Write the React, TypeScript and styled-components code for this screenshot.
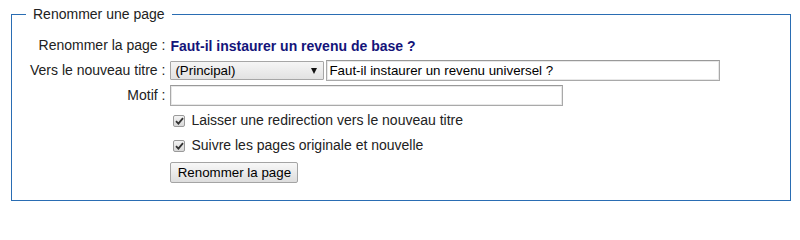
import React from "react";
import styled, { createGlobalStyle } from "styled-components";

const Global = createGlobalStyle`
  html, body { margin: 0; padding: 0; background: #fff; }
  body { font-family: "Liberation Sans", Arial, sans-serif; font-size: 14px; color: #222; }
  * { box-sizing: border-box; }
`;

const Page = styled.div`
  padding: 6px 9px 0 11px;
  width: 800px;
`;

const Fieldset = styled.fieldset`
  margin: 0;
  border: 1px solid #2a6db3;
  padding: 10px 10px 17px 18px;
  min-width: 0;
`;

const Legend = styled.legend`
  margin-left: -4px;
  padding: 0 7px;
  font-size: 14px;
  line-height: 17px;
  color: #222;
`;

const Form = styled.div`
  display: grid;
  grid-template-columns: max-content 1fr;
  grid-auto-rows: 25px;
  column-gap: 5px;
  align-items: center;
`;

const Label = styled.div`
  text-align: right;
  white-space: nowrap;
  line-height: 17px;
`;

const Value = styled.div<{ $col?: number }>`
  grid-column: ${(p) => (p.$col ? p.$col : "auto")};
  display: flex;
  align-items: center;
  gap: 2px;
`;

const PageTitle = styled.span`
  font-weight: bold;
  color: #14147a;
`;

const SelectBox = styled.div`
  position: relative;
  width: 154px;
  height: 19px;
  border: 1px solid #a6a6a6;
  border-radius: 1px;
  background: linear-gradient(#f5f5f5, #e2e2e2);
  font-size: 13.33px;
  line-height: 17px;
  padding-left: 4px;
  color: #000;
`;

const Arrow = styled.span`
  position: absolute;
  right: 6px;
  top: 6px;
  width: 0;
  height: 0;
  border-left: 3.5px solid transparent;
  border-right: 3.5px solid transparent;
  border-top: 6px solid #111;
`;

const TextInput = styled.input<{ $w: number }>`
  width: ${(p) => p.$w}px;
  height: 21px;
  border: 1px solid #a9a9a9;
  border-top-color: #999;
  box-shadow: inset 0 0 0 1px #e8e8e8;
  padding: 1px 2px;
  font-family: "Liberation Sans", Arial, sans-serif;
  font-size: 13.33px;
  color: #000;
  margin: 0;
  outline: none;
`;

const CheckRow = styled.label`
  display: flex;
  align-items: center;
  gap: 6px;
  padding-left: 3px;
  line-height: 17px;
`;

const Box = styled.span`
  width: 12px;
  height: 12px;
  border: 1px solid #9a9a9a;
  border-radius: 2px;
  background: linear-gradient(#f4f4f4, #d8d8d8);
  display: inline-flex;
  align-items: center;
  justify-content: center;
`;

const Button = styled.button`
  margin: 0;
  height: 21px;
  width: 128px;
  border: 1px solid #a4a4a4;
  border-radius: 2px;
  background: linear-gradient(#f8f8f8, #dddddd);
  font-family: "Liberation Sans", Arial, sans-serif;
  font-size: 13.33px;
  color: #000;
  padding: 0 6px;
  align-self: start;
  margin-top: 3px;
`;

const Check = () => (
  <Box>
    <svg width="9" height="8" viewBox="0 0 9 8">
      <path d="M1 4.2 L3.4 6.6 L8 1.2" fill="none" stroke="#333" strokeWidth="1.8" />
    </svg>
  </Box>
);

export default function App() {
  return (
    <Page>
      <Global />
      <Fieldset>
        <Legend>Renommer une page</Legend>
        <Form>
          <Label>Renommer la page :</Label>
          <Value>
            <PageTitle>Faut-il instaurer un revenu de base ?</PageTitle>
          </Value>

          <Label>Vers le nouveau titre :</Label>
          <Value>
            <SelectBox>
              (Principal)
              <Arrow />
            </SelectBox>
            <TextInput $w={394} defaultValue="Faut-il instaurer un revenu universel ?" />
          </Value>

          <Label>Motif :</Label>
          <Value>
            <TextInput $w={393} defaultValue="" />
          </Value>

          <Value $col={2}>
            <CheckRow>
              <Check />
              Laisser une redirection vers le nouveau titre
            </CheckRow>
          </Value>

          <Value $col={2}>
            <CheckRow>
              <Check />
              Suivre les pages originale et nouvelle
            </CheckRow>
          </Value>

          <Value $col={2}>
            <Button>Renommer la page</Button>
          </Value>
        </Form>
      </Fieldset>
    </Page>
  );
}
